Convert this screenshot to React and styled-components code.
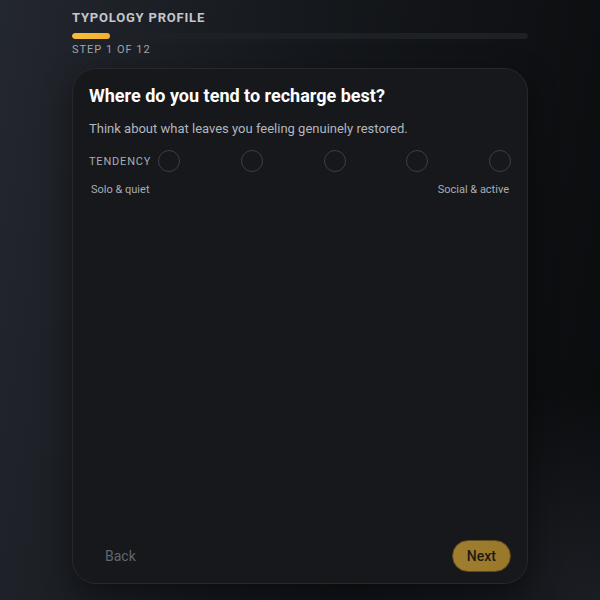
import { styled, createGlobalStyle } from 'styled-components';

const GlobalStyle = createGlobalStyle`
  html, body {
    margin: 0;
    padding: 0;
    height: 100%;
  }
  body {
    font-family: Roboto, "Liberation Sans", sans-serif;
    background:
      radial-gradient(ellipse 60% 50% at 100% 100%, rgba(40, 44, 52, 0.55), transparent 70%),
      linear-gradient(100deg, #23272e 0%, #15181c 45%, #0a0b0d 100%);
    min-height: 600px;
  }
`;

const steps = [1, 2, 3, 4, 5];

const App = () => {
  return (
    <>
      <GlobalStyle />
      <PageStyled>
        <HeaderTitleStyled>Typology Profile</HeaderTitleStyled>
        <ProgressTrackStyled>
          <ProgressFillStyled style={{ width: `${(1 / 12) * 100}%` }} />
        </ProgressTrackStyled>
        <StepLabelStyled>Step 1 of 12</StepLabelStyled>

        <CardStyled>
          <QuestionStyled>Where do you tend to recharge best?</QuestionStyled>
          <HintStyled>Think about what leaves you feeling genuinely restored.</HintStyled>

          <ScaleRowStyled>
            <ScaleLabelStyled>Tendency</ScaleLabelStyled>
            <OptionsStyled>
              {steps.map((s) => (
                <OptionStyled key={s} aria-label={`option ${s}`} />
              ))}
            </OptionsStyled>
          </ScaleRowStyled>
          <EndsRowStyled>
            <EndLabelStyled>Solo &amp; quiet</EndLabelStyled>
            <EndLabelStyled>Social &amp; active</EndLabelStyled>
          </EndsRowStyled>

          <FooterStyled>
            <BackButtonStyled>Back</BackButtonStyled>
            <NextButtonStyled>Next</NextButtonStyled>
          </FooterStyled>
        </CardStyled>
      </PageStyled>
    </>
  );
};

export default App;

const PageStyled = styled.div`
  width: 456px;
  margin: 0 auto;
  padding-top: 10px;
  display: flex;
  flex-direction: column;
`;

const HeaderTitleStyled = styled.div`
  font-size: 13px;
  line-height: 16px;
  font-weight: 700;
  letter-spacing: 0.8px;
  text-transform: uppercase;
  color: #c3c7cd;
`;

const ProgressTrackStyled = styled.div`
  margin-top: 7px;
  height: 6px;
  border-radius: 3px;
  background: #1d2025;
  overflow: hidden;
`;

const ProgressFillStyled = styled.div`
  height: 100%;
  border-radius: 3px;
  background: linear-gradient(90deg, #f7bd3a, #f3b02b);
`;

const StepLabelStyled = styled.div`
  margin-top: 4px;
  font-size: 11px;
  line-height: 14px;
  letter-spacing: 1px;
  text-transform: uppercase;
  color: #a1a6ad;
`;

const CardStyled = styled.div`
  margin-top: 11px;
  height: 516px;
  box-sizing: border-box;
  padding: 16px 16px 11px;
  border-radius: 24px;
  border: 1px solid #25282d;
  background: #16181c;
  box-shadow: 0 10px 30px rgba(0, 0, 0, 0.45);
  display: flex;
  flex-direction: column;
`;

const QuestionStyled = styled.h1`
  margin: 0;
  font-size: 18px;
  line-height: 22px;
  font-weight: 700;
  color: #ffffff;
`;

const HintStyled = styled.p`
  margin: 12px 0 0;
  font-size: 13px;
  line-height: 20px;
  color: #b2b6bd;
`;

const ScaleRowStyled = styled.div`
  margin-top: 11px;
  display: flex;
  align-items: center;
  gap: 7px;
`;

const ScaleLabelStyled = styled.span`
  font-size: 11px;
  letter-spacing: 0.8px;
  text-transform: uppercase;
  color: #a9adb4;
`;

const OptionsStyled = styled.div`
  flex: 1;
  display: flex;
  justify-content: space-between;
`;

const OptionStyled = styled.button`
  width: 22px;
  height: 22px;
  padding: 0;
  border-radius: 50%;
  border: 1px solid #3b3e44;
  background: transparent;
  cursor: pointer;
`;

const EndsRowStyled = styled.div`
  margin-top: 11px;
  padding: 0 2px;
  display: flex;
  justify-content: space-between;
`;

const EndLabelStyled = styled.span`
  font-size: 11px;
  line-height: 14px;
  color: #a9adb4;
`;

const FooterStyled = styled.div`
  margin-top: auto;
  display: flex;
  justify-content: space-between;
  align-items: center;
`;

const BackButtonStyled = styled.button`
  padding: 0 16px;
  height: 32px;
  border: none;
  background: transparent;
  font-family: inherit;
  font-size: 14px;
  color: #62676f;
  cursor: pointer;
`;

const NextButtonStyled = styled.button`
  height: 32px;
  padding: 0 14px;
  border-radius: 16px;
  border: 1px solid #5e4a1d;
  background: linear-gradient(90deg, #a07e2f, #9a782b);
  font-family: inherit;
  font-size: 14px;
  font-weight: 500;
  color: #1b1a17;
  cursor: pointer;
`;
